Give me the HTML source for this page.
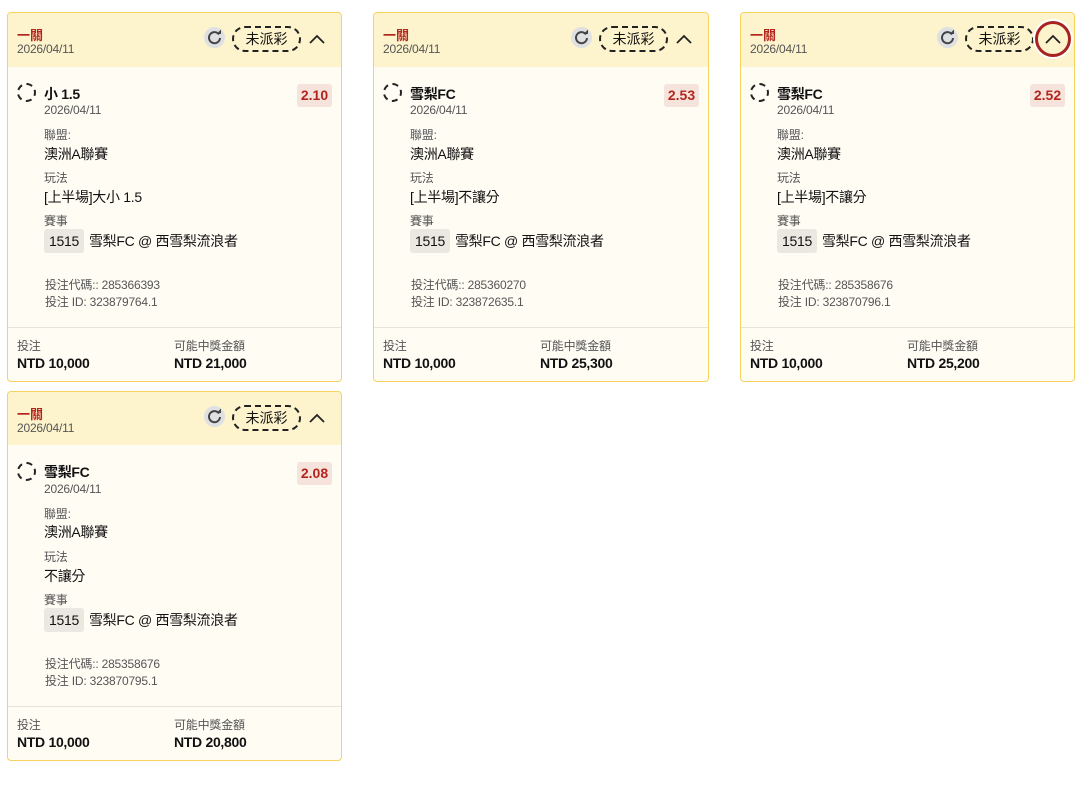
<!DOCTYPE html>
<html><head><meta charset="utf-8"><style>
*{margin:0;padding:0;box-sizing:border-box}
body{width:1080px;height:788px;background:#fff;font-family:"Liberation Sans","Noto Sans CJK TC",sans-serif;color:#111;position:relative;overflow:hidden}
.card{position:absolute;width:335px;height:370px;border:1.5px solid #f5d35e;border-radius:4px;background:#fffcf4;overflow:hidden}
.hd{position:absolute;left:0;top:0;right:0;height:54px;background:#fdf3cc}
.ab{position:absolute;white-space:nowrap}
.red{color:#b3261e}
.g{color:#555;font-size:12px;letter-spacing:-0.2px}
.t{font-size:14px;letter-spacing:-0.3px}
.b{font-weight:bold}
.ref{position:absolute;width:21px;height:21px;border-radius:50%;background:#dfe0e2;top:14px}
.badge{position:absolute;top:13px;width:69px;height:26px;border:2px dashed #222;border-radius:13px;font-size:14px;text-align:center;line-height:22px}
.chev{position:absolute;top:14px;width:24px;height:24px}
.dc{position:absolute;left:9px;top:70px;width:19px;height:19px;border:2px dashed #222;border-radius:50%}
.odds{position:absolute;right:9px;top:71px;width:35px;height:23px;background:#f6e4dc;border-radius:3px;color:#b3261e;font-weight:bold;font-size:14px;text-align:center;line-height:23px}
.num{display:inline-block;background:#ebe8e1;border-radius:3px;padding:0 5px;height:24px;line-height:24px;margin-right:5px}
.div{position:absolute;left:0;right:0;top:314px;border-top:1.5px solid #e8e4da}
</style></head><body>

<div class="card" style="left:7px;top:12px">
<div class="hd"></div>
<div class="ab red b" style="left:9px;top:12px;font-size:13px">一關</div>
<div class="ab g" style="left:9px;top:28px;top:29px">2026/04/11</div>
<div class="ref" style="right:116px"><svg width="21" height="21" viewBox="0 0 21 21"><path d="M15 7.5A5.5 5.5 0 1 0 16 11" fill="none" stroke="#444" stroke-width="2"/><path d="M12.5 7h4.5V2.5z" fill="#444"/></svg></div>
<div class="badge" style="right:40px">未派彩</div>
<svg class="chev" style="right:12px" viewBox="0 0 24 24"><path d="M5 16l7-7 7 7" fill="none" stroke="#222" stroke-width="1.8"/></svg>
<div class="dc"></div>
<div class="ab t b" style="left:36px;top:71px">小 1.5</div>
<div class="odds">2.10</div>
<div class="ab g" style="left:36px;top:90px">2026/04/11</div>
<div class="ab g" style="left:36px;top:113px">聯盟:</div>
<div class="ab t" style="left:36px;top:131px">澳洲A聯賽</div>
<div class="ab g" style="left:36px;top:156px">玩法</div>
<div class="ab t" style="left:36px;top:174px">[上半場]大小 1.5</div>
<div class="ab g" style="left:36px;top:199px">賽事</div>
<div class="ab t" style="left:36px;top:216px"><span class="num">1515</span>雪梨FC @ 西雪梨流浪者</div>
<div class="ab g" style="left:37px;top:263px">投注代碼:: 285366393</div>
<div class="ab g" style="left:37px;top:280px">投注 ID: 323879764.1</div>
<div class="div"></div>
<div class="ab g" style="left:9px;top:324px">投注</div>
<div class="ab t b" style="left:9px;top:342px">NTD 10,000</div>
<div class="ab g" style="left:166px;top:324px">可能中獎金額</div>
<div class="ab t b" style="left:166px;top:342px">NTD 21,000</div>
</div>

<div class="card" style="left:373px;top:12px;width:336px">
<div class="hd"></div>
<div class="ab red b" style="left:9px;top:12px;font-size:13px">一關</div>
<div class="ab g" style="left:9px;top:29px">2026/04/11</div>
<div class="ref" style="right:116px"><svg width="21" height="21" viewBox="0 0 21 21"><path d="M15 7.5A5.5 5.5 0 1 0 16 11" fill="none" stroke="#444" stroke-width="2"/><path d="M12.5 7h4.5V2.5z" fill="#444"/></svg></div>
<div class="badge" style="right:40px">未派彩</div>
<svg class="chev" style="right:12px" viewBox="0 0 24 24"><path d="M5 16l7-7 7 7" fill="none" stroke="#222" stroke-width="1.8"/></svg>
<div class="dc"></div>
<div class="ab t b" style="left:36px;top:71px">雪梨FC</div>
<div class="odds">2.53</div>
<div class="ab g" style="left:36px;top:90px">2026/04/11</div>
<div class="ab g" style="left:36px;top:113px">聯盟:</div>
<div class="ab t" style="left:36px;top:131px">澳洲A聯賽</div>
<div class="ab g" style="left:36px;top:156px">玩法</div>
<div class="ab t" style="left:36px;top:174px">[上半場]不讓分</div>
<div class="ab g" style="left:36px;top:199px">賽事</div>
<div class="ab t" style="left:36px;top:216px"><span class="num">1515</span>雪梨FC @ 西雪梨流浪者</div>
<div class="ab g" style="left:37px;top:263px">投注代碼:: 285360270</div>
<div class="ab g" style="left:37px;top:280px">投注 ID: 323872635.1</div>
<div class="div"></div>
<div class="ab g" style="left:9px;top:324px">投注</div>
<div class="ab t b" style="left:9px;top:342px">NTD 10,000</div>
<div class="ab g" style="left:166px;top:324px">可能中獎金額</div>
<div class="ab t b" style="left:166px;top:342px">NTD 25,300</div>
</div>

<div class="card" style="left:740px;top:12px;width:335px">
<div class="hd"></div>
<div class="ab red b" style="left:9px;top:12px;font-size:13px">一關</div>
<div class="ab g" style="left:9px;top:29px">2026/04/11</div>
<div class="ref" style="right:116px"><svg width="21" height="21" viewBox="0 0 21 21"><path d="M15 7.5A5.5 5.5 0 1 0 16 11" fill="none" stroke="#444" stroke-width="2"/><path d="M12.5 7h4.5V2.5z" fill="#444"/></svg></div>
<div class="badge" style="right:40px">未派彩</div>
<div style="position:absolute;right:3px;top:8px;width:36px;height:36px;border-radius:50%;border:3px solid #a8231f;background:#fdf3cc;box-shadow:0 0 0 2px #fff"></div>
<svg class="chev" style="right:9px" viewBox="0 0 24 24"><path d="M5 16l7-7 7 7" fill="none" stroke="#222" stroke-width="1.8"/></svg>
<div class="dc"></div>
<div class="ab t b" style="left:36px;top:71px">雪梨FC</div>
<div class="odds">2.52</div>
<div class="ab g" style="left:36px;top:90px">2026/04/11</div>
<div class="ab g" style="left:36px;top:113px">聯盟:</div>
<div class="ab t" style="left:36px;top:131px">澳洲A聯賽</div>
<div class="ab g" style="left:36px;top:156px">玩法</div>
<div class="ab t" style="left:36px;top:174px">[上半場]不讓分</div>
<div class="ab g" style="left:36px;top:199px">賽事</div>
<div class="ab t" style="left:36px;top:216px"><span class="num">1515</span>雪梨FC @ 西雪梨流浪者</div>
<div class="ab g" style="left:37px;top:263px">投注代碼:: 285358676</div>
<div class="ab g" style="left:37px;top:280px">投注 ID: 323870796.1</div>
<div class="div"></div>
<div class="ab g" style="left:9px;top:324px">投注</div>
<div class="ab t b" style="left:9px;top:342px">NTD 10,000</div>
<div class="ab g" style="left:166px;top:324px">可能中獎金額</div>
<div class="ab t b" style="left:166px;top:342px">NTD 25,200</div>
</div>

<div class="card" style="left:7px;top:391px">
<div class="hd" style="height:53px"></div>
<div class="ab red b" style="left:9px;top:12px;font-size:13px">一關</div>
<div class="ab g" style="left:9px;top:29px">2026/04/11</div>
<div class="ref" style="right:116px"><svg width="21" height="21" viewBox="0 0 21 21"><path d="M15 7.5A5.5 5.5 0 1 0 16 11" fill="none" stroke="#444" stroke-width="2"/><path d="M12.5 7h4.5V2.5z" fill="#444"/></svg></div>
<div class="badge" style="right:40px">未派彩</div>
<svg class="chev" style="right:12px" viewBox="0 0 24 24"><path d="M5 16l7-7 7 7" fill="none" stroke="#222" stroke-width="1.8"/></svg>
<div class="dc"></div>
<div class="ab t b" style="left:36px;top:70px">雪梨FC</div>
<div class="odds" style="top:70px">2.08</div>
<div class="ab g" style="left:36px;top:90px">2026/04/11</div>
<div class="ab g" style="left:36px;top:113px">聯盟:</div>
<div class="ab t" style="left:36px;top:130px">澳洲A聯賽</div>
<div class="ab g" style="left:36px;top:156px">玩法</div>
<div class="ab t" style="left:36px;top:174px">不讓分</div>
<div class="ab g" style="left:36px;top:199px">賽事</div>
<div class="ab t" style="left:36px;top:216px"><span class="num">1515</span>雪梨FC @ 西雪梨流浪者</div>
<div class="ab g" style="left:37px;top:263px">投注代碼:: 285358676</div>
<div class="ab g" style="left:37px;top:280px">投注 ID: 323870795.1</div>
<div class="div"></div>
<div class="ab g" style="left:9px;top:324px">投注</div>
<div class="ab t b" style="left:9px;top:342px">NTD 10,000</div>
<div class="ab g" style="left:166px;top:324px">可能中獎金額</div>
<div class="ab t b" style="left:166px;top:342px">NTD 20,800</div>
</div>

</body></html>
